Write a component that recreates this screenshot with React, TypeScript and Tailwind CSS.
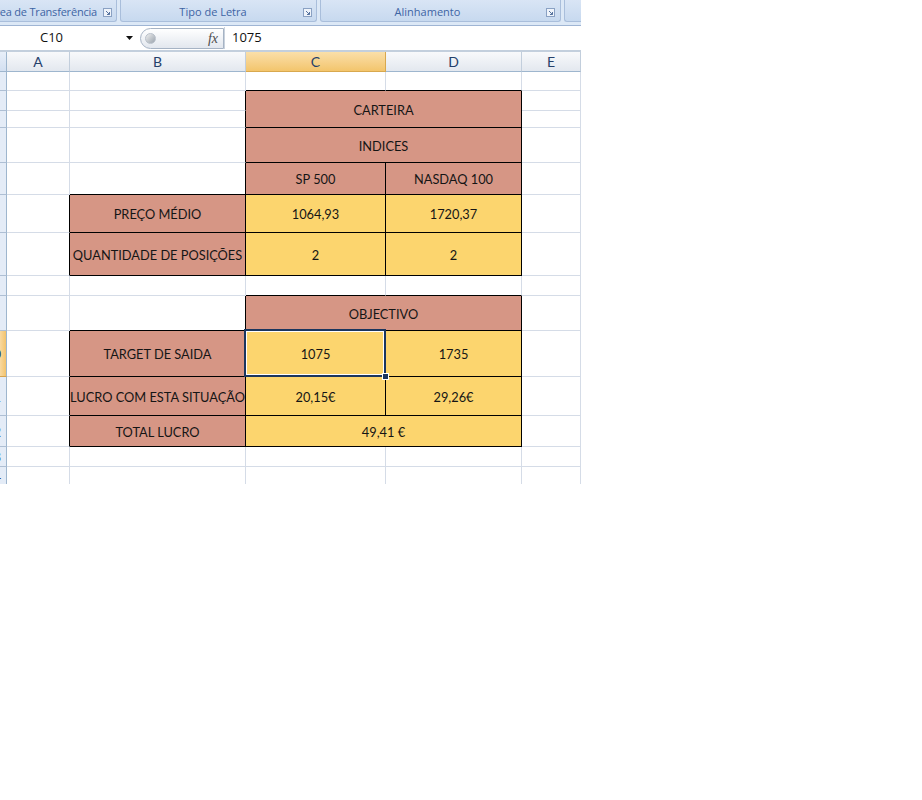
import React from 'react';

type Edge = 'k' | 'g';
type Cell = {
  t?: string;
  span?: 2;
  rows?: 2;
  fill?: 'rose' | 'gold';
  r?: Edge;
  b?: Edge;
  sel?: boolean;
};

// rows 1..14, each row lists cells A..E (merged cells take the place of the ones they cover)
const ROWS: Cell[][] = [
  [{}, {}, { b: 'k' }, { b: 'k' }, {}],
  [{}, { r: 'k' }, { t: 'CARTEIRA', span: 2, rows: 2, fill: 'rose' }, {}],
  [{}, { r: 'k' }, {}],
  [{}, { r: 'k' }, { t: 'INDICES', span: 2, fill: 'rose' }, {}],
  [{}, { r: 'k', b: 'k' }, { t: 'SP 500', fill: 'rose' }, { t: 'NASDAQ 100', fill: 'rose' }, {}],
  [{ r: 'k' }, { t: 'PREÇO MÉDIO', fill: 'rose' }, { t: '1064,93', fill: 'gold' }, { t: '1720,37', fill: 'gold' }, {}],
  [{ r: 'k' }, { t: 'QUANTIDADE DE POSIÇÕES', fill: 'rose' }, { t: '2', fill: 'gold' }, { t: '2', fill: 'gold' }, {}],
  [{}, {}, { b: 'k' }, { b: 'k' }, {}],
  [{}, { r: 'k', b: 'k' }, { t: 'OBJECTIVO', span: 2, fill: 'rose' }, {}],
  [{ r: 'k' }, { t: 'TARGET DE SAIDA', fill: 'rose' }, { t: '1075', fill: 'gold', sel: true }, { t: '1735', fill: 'gold' }, {}],
  [{ r: 'k' }, { t: 'LUCRO COM ESTA SITUAÇÃO', fill: 'rose' }, { t: '20,15€', fill: 'gold' }, { t: '29,26€', fill: 'gold' }, {}],
  [{ r: 'k' }, { t: 'TOTAL LUCRO', fill: 'rose' }, { t: '49,41 €', span: 2, fill: 'gold' }, {}],
  [{}, {}, {}, {}, {}],
  [{}, {}, {}, {}, {}],
];

const COLS = ['A', 'B', 'C', 'D', 'E'];

function Launcher() {
  return (
    <svg width="9" height="9" viewBox="0 0 9 9" className="shrink-0">
      <rect x="0.5" y="0.5" width="8" height="8" fill="#eef3fa" stroke="#8aa1c3" />
      <path d="M3 3 L6.5 6.5 M6.5 4 V6.5 H4" stroke="#56739f" strokeWidth="1" fill="none" />
    </svg>
  );
}

function Ribbon() {
  const grp = 'shrink-0 h-[22px] rounded-b-[3px] border-x border-b border-[#a9bedb] bg-gradient-to-b from-[#d9e5f5] to-[#c7d9ef] flex items-center pt-[4px] text-[11px] text-[#3e64a4] whitespace-nowrap';
  return (
    <div className="h-[26px] bg-[#dce8f6] border-b border-[#9fb5d4] flex gap-[3px] overflow-hidden" style={{ fontFamily: '"Open Sans", "Noto Sans", sans-serif' }}>
      <div className={`${grp} w-[117px] border-l-0 rounded-bl-none justify-end gap-[6px] pr-[4px] overflow-hidden`}>
        <span className="shrink-0 tracking-[-0.2px]">Área de Transferência</span>
        <Launcher />
      </div>
      <div className={`${grp} w-[197px]`}>
        <span className="flex-1 text-center pl-[2px]">Tipo de Letra</span>
        <span className="pr-[4px]"><Launcher /></span>
      </div>
      <div className={`${grp} w-[241px]`}>
        <span className="flex-1 text-center pr-[12px]">Alinhamento</span>
        <span className="pr-[5px]"><Launcher /></span>
      </div>
      <div className={`${grp} w-[40px] border-r-0`} />
    </div>
  );
}

function FormulaBar() {
  return (
    <div className="h-[26px] bg-white border-b-2 border-[#c3cfdd] flex items-center text-[13px] text-[#111]" style={{ fontFamily: '"Open Sans", "Noto Sans", sans-serif' }}>
      <div className="w-[140px] flex items-center pl-[40px] pr-[7px]">
        <span className="flex-1">C10</span>
        <svg width="7" height="4" viewBox="0 0 7 4"><path d="M0 0 H7 L3.5 4 Z" fill="#111" /></svg>
      </div>
      <div className="w-[84px] h-[21px] rounded-l-full border border-[#a6b3c4] bg-gradient-to-b from-white to-[#e2e7ee] flex items-center pl-[4px] pr-[5px]">
        <span className="w-[11px] h-[11px] rounded-full bg-gradient-to-br from-[#f0f0f0] to-[#9aa3ad] border border-[#b8c0ca]" />
        <span className="flex-1" />
        <span className="italic text-[14px] text-[#4c4c4c]" style={{ fontFamily: '"Liberation Serif", serif' }}>fx</span>
      </div>
      <div className="w-px h-[22px] bg-[#c9d2dd]" />
      <span className="pl-[7px]">1075</span>
    </div>
  );
}

function edge(side: 'r' | 'b', e: Edge) {
  if (side === 'r') return e === 'k' ? 'border-r-black' : 'border-r-[#d5dce7]';
  return e === 'k' ? 'border-b-black' : 'border-b-[#d5dce7]';
}

function GridCell({ c }: { c: Cell }) {
  const filled = !!c.fill;
  const r = c.r ?? (filled ? 'k' : 'g');
  const b = c.b ?? (filled ? 'k' : 'g');
  const cls = [
    'relative border-r border-b flex items-center justify-center whitespace-nowrap pt-[2px]',
    edge('r', r),
    edge('b', b),
    c.span === 2 ? 'col-span-2' : '',
    c.rows === 2 ? 'row-span-2' : '',
    c.fill === 'rose' ? 'bg-[#d69685]' : c.fill === 'gold' ? 'bg-[#fcd56e]' : 'bg-white',
  ].join(' ');
  return (
    <div className={cls}>
      {c.t && <span className="text-[12.8px] text-[#151515] leading-none">{c.t}</span>}
      {c.sel && (
        <>
          <div className="absolute left-[-2px] top-[-2px] right-[-1px] bottom-[-1px] border-2 border-[#1b365e] shadow-[inset_0_0_0_1px_#ffffff]" />
          <div className="absolute right-[-4px] bottom-[-4px] w-[7px] h-[7px] bg-[#1b365e] border border-white z-10" />
        </>
      )}
    </div>
  );
}

function Sheet() {
  return (
    <div className="h-[432px] overflow-hidden">
      <div
        className="grid grid-cols-[7px_63px_176px_140px_136px_59px] grid-rows-[20px_19px_20px_17px_35px_32px_38px_43px_20px_35px_46px_39px_31px_20px_20px]"
        style={{ fontFamily: 'Lato, "Liberation Sans", sans-serif' }}
      >
        <div className="bg-gradient-to-b from-[#e8eff9] to-[#d3e0f1] border-r border-b border-[#9eb6ce]" />
        {COLS.map(l => (
          <div
            key={l}
            className={`border-r border-b flex items-center justify-center text-[14px] text-[#25406a] ${
              l === 'C'
                ? 'bg-gradient-to-b from-[#fadfa9] to-[#f3c56c] border-[#d8a84e]'
                : 'bg-gradient-to-b from-[#f8f9fb] to-[#e3e8ef] border-[#c2cedc] border-b-[#9eb6ce]'
            }`}
          >
            {l}
          </div>
        ))}
        {ROWS.map((row, i) => (
          <React.Fragment key={i}>
            <div
              className={`border-r border-b overflow-hidden flex justify-end items-center text-[14px] text-[#25406a] ${
                i === 9 ? 'bg-gradient-to-r from-[#f8d9a0] to-[#f3c36b] border-r-[#9eb6ce] border-b-[#d6a34e]' : 'bg-[#e4ecf7] border-r-[#9eb6ce] border-b-[#aebfd4]'
              }`}
            >
              <span className="shrink-0 w-[26px] text-center">{i + 1}</span>
            </div>
            {row.map((c, j) => <GridCell key={j} c={c} />)}
          </React.Fragment>
        ))}
      </div>
    </div>
  );
}

export default function App() {
  return (
    <div className="w-[922px] h-[800px] bg-white">
      <div className="w-[581px] overflow-hidden">
        <Ribbon />
        <FormulaBar />
        <Sheet />
      </div>
    </div>
  );
}
